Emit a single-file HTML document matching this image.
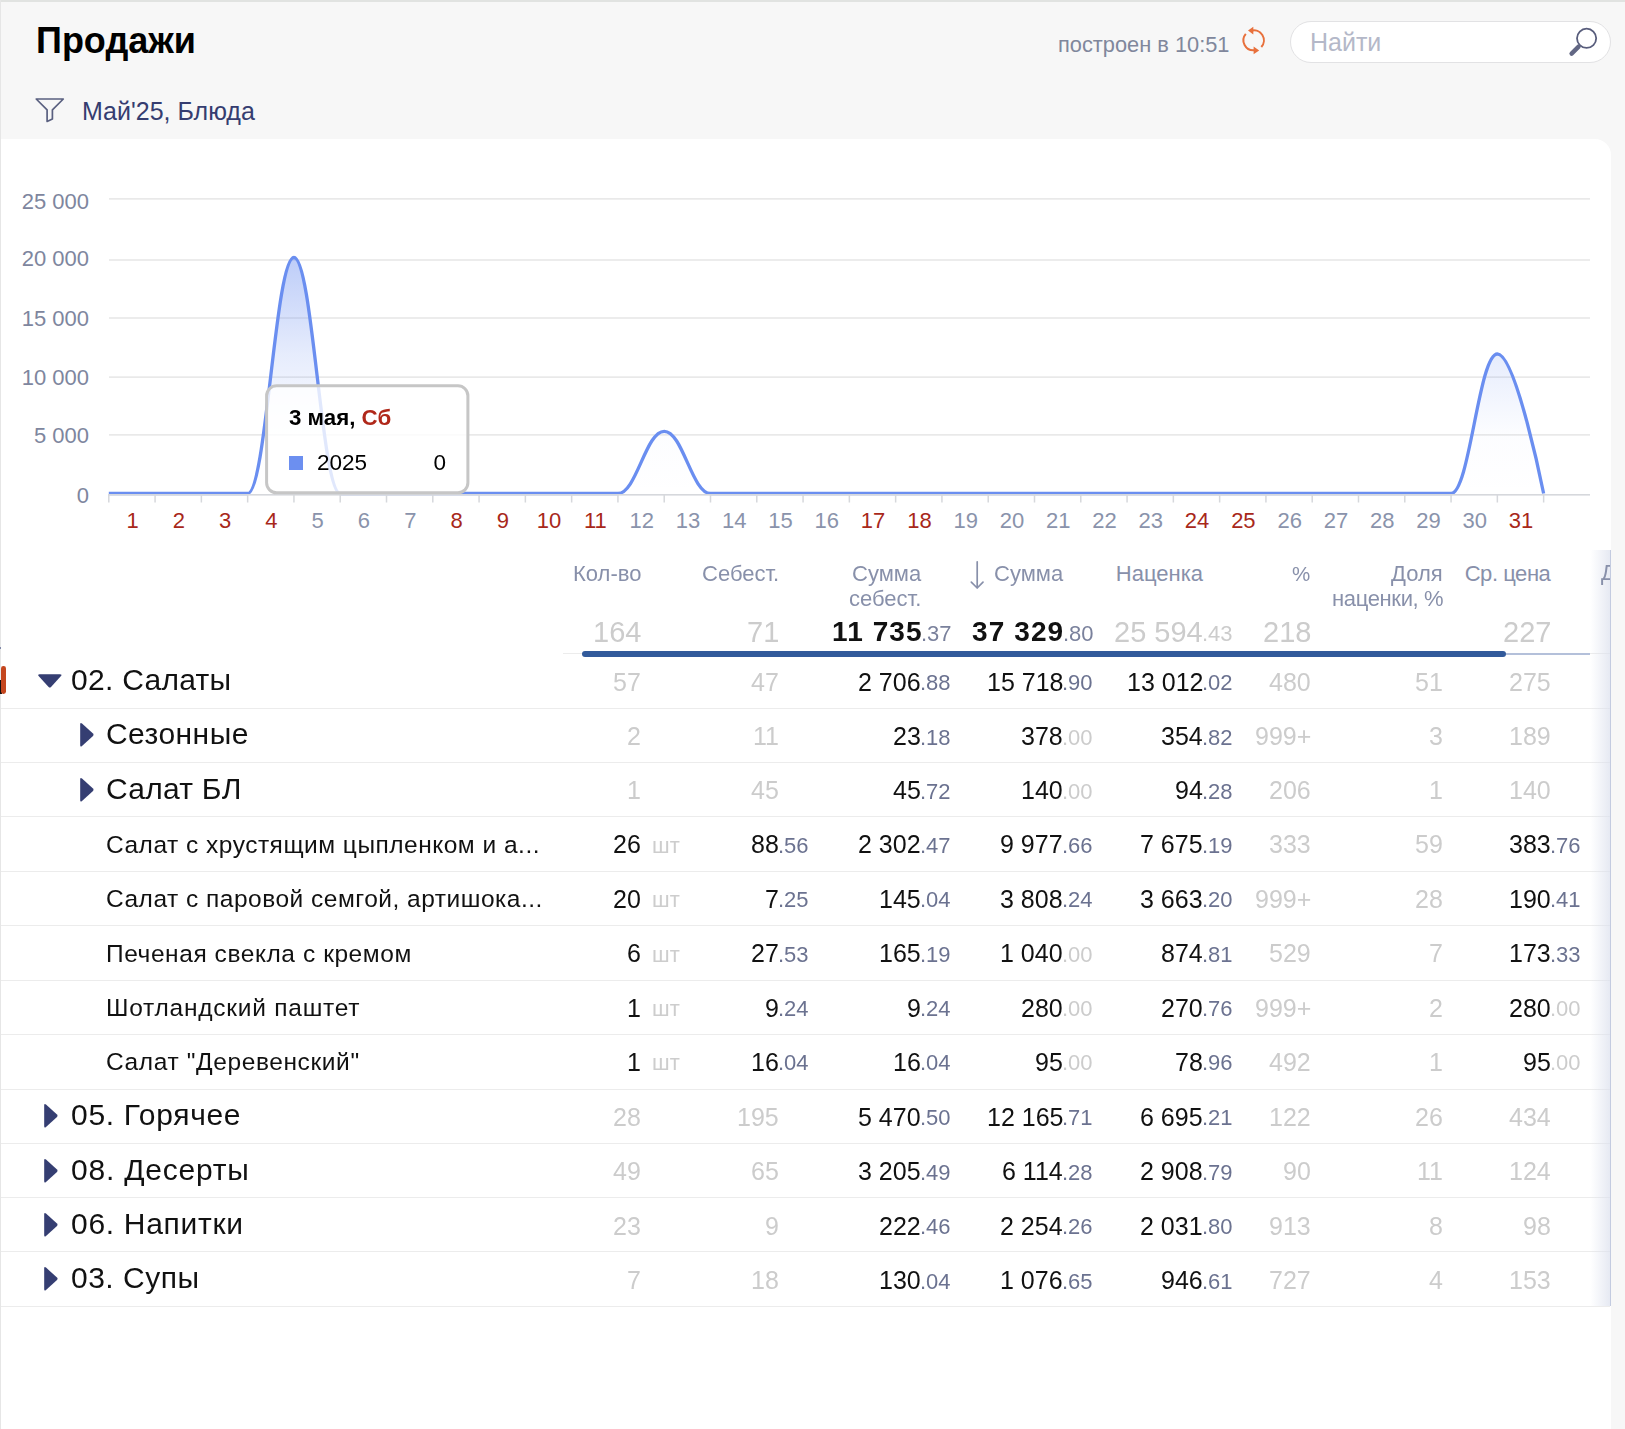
<!DOCTYPE html>
<html><head><meta charset="utf-8"><title>Продажи</title>
<style>
html,body{margin:0;padding:0;}
body{width:1625px;height:1429px;position:relative;overflow:hidden;background:#f7f7f7;font-family:"Liberation Sans",sans-serif;}
.a{position:absolute;white-space:nowrap;line-height:1;}
.r{position:absolute;}
svg text{font-family:"Liberation Sans",sans-serif;}
</style></head><body>
<div class="r" style="left:0px;top:0px;width:1625px;height:2px;background:#e1e3e1;"></div>
<div class="r" style="left:0px;top:0px;width:1px;height:1429px;background:#e6e6e6;"></div>
<div class="r" style="left:1px;top:139px;width:1610px;height:1290px;background:#fff;border-top-right-radius:16px;"></div>
<span class="a" style="top:23.03px;font-size:36px;color:#000;font-weight:bold;left:36.00px;">Продажи</span>
<span class="a" style="top:98.84px;font-size:25px;color:#353d70;left:82.00px;">Май'25, Блюда</span>
<svg class="r" style="left:30px;top:90px" width="40" height="40" viewBox="30 90 40 40">
<path d="M36.2 99 H63.3 L52.4 109.8 V118.9 L47.1 121.4 V109.8 Z" fill="none" stroke="#5a6080" stroke-width="1.7" stroke-linejoin="round"/></svg>
<span class="a" style="top:34.25px;font-size:21.8px;color:#80879c;left:1058.00px;">построен в 10:51</span>
<svg class="r" style="left:1235px;top:20px" width="40" height="40" viewBox="1235 20 40 40">
<g fill="none" stroke="#e8703c" stroke-width="2">
<path d="M1251 30.7 A10 10 0 0 1 1261.3 47"/>
<path d="M1245.8 33.8 A10 10 0 0 0 1254.5 50.2"/>
</g>
<path d="M1248 30.5 L1253.3 26.8 L1253.3 34.4 Z" fill="#e8703c"/>
<path d="M1259.2 50.4 L1253.6 46.6 L1253.6 54.2 Z" fill="#e8703c"/>
</svg>
<div class="r" style="left:1289.5px;top:21px;width:320px;height:40px;background:#fff;border:1px solid #e2e2e4;border-radius:21px;box-sizing:border-box;height:41.5px;width:321.5px;"></div>
<span class="a" style="top:29.64px;font-size:25px;color:#b4b8c8;left:1310.00px;">Найти</span>
<svg class="r" style="left:1560px;top:20px" width="45" height="45" viewBox="1560 20 45 45">
<circle cx="1586.6" cy="38.3" r="9.6" fill="none" stroke="#585d7c" stroke-width="1.8"/>
<path d="M1578.6 46.6 L1571.6 53.6" stroke="#626784" stroke-width="4.4" stroke-linecap="round"/>
</svg>
<svg class="r" style="left:0;top:0" width="1625" height="560" viewBox="0 0 1625 560">
<defs><linearGradient id="g" gradientUnits="userSpaceOnUse" x1="0" y1="257" x2="0" y2="493"><stop offset="0" stop-color="#6c8ff0" stop-opacity="0.45"/><stop offset="0.41" stop-color="#6c8ff0" stop-opacity="0.17"/><stop offset="0.75" stop-color="#6c8ff0" stop-opacity="0.02"/><stop offset="1" stop-color="#6c8ff0" stop-opacity="0"/></linearGradient></defs>
<rect x="109" y="198.15" width="1481" height="1.5" fill="#e6e6e6"/>
<rect x="109" y="259.25" width="1481" height="1.5" fill="#e6e6e6"/>
<rect x="109" y="317.25" width="1481" height="1.5" fill="#e6e6e6"/>
<rect x="109" y="376.35" width="1481" height="1.5" fill="#e6e6e6"/>
<rect x="109" y="434.15" width="1481" height="1.5" fill="#e6e6e6"/>
<path d="M108.80 493.50 C108.80 493.50 136.57 493.50 155.08 493.50 C173.60 493.50 182.86 493.50 201.37 493.50 C219.88 493.50 229.14 493.50 247.65 493.50 C266.17 493.50 275.43 257.50 293.94 257.50 C312.45 257.50 321.71 493.50 340.22 493.50 C358.74 493.50 368.00 493.50 386.51 493.50 C405.02 493.50 414.28 493.50 432.80 493.50 C451.31 493.50 460.57 493.50 479.08 493.50 C497.59 493.50 506.85 493.50 525.36 493.50 C543.88 493.50 553.14 493.50 571.65 493.50 C590.16 493.50 599.42 493.50 617.93 493.50 C636.45 493.50 645.71 431.30 664.22 431.30 C682.73 431.30 691.99 493.50 710.50 493.50 C729.02 493.50 738.28 493.50 756.79 493.50 C775.30 493.50 784.56 493.50 803.07 493.50 C821.59 493.50 830.85 493.50 849.36 493.50 C867.87 493.50 877.13 493.50 895.64 493.50 C914.16 493.50 923.42 493.50 941.93 493.50 C960.44 493.50 969.70 493.50 988.21 493.50 C1006.73 493.50 1015.99 493.50 1034.50 493.50 C1053.01 493.50 1062.27 493.50 1080.78 493.50 C1099.30 493.50 1108.56 493.50 1127.07 493.50 C1145.58 493.50 1154.84 493.50 1173.35 493.50 C1191.87 493.50 1201.13 493.50 1219.64 493.50 C1238.15 493.50 1247.41 493.50 1265.92 493.50 C1284.44 493.50 1293.70 493.50 1312.21 493.50 C1330.72 493.50 1339.98 493.50 1358.49 493.50 C1377.01 493.50 1386.27 493.50 1404.78 493.50 C1423.29 493.50 1432.55 493.50 1451.06 493.50 C1469.58 493.50 1478.84 354.00 1497.35 354.00 C1515.86 354.00 1543.63 493.50 1543.63 493.50 L1543.63 493.5 L108.80 493.5 Z" fill="url(#g)"/>
<path d="M108.80 493.50 C108.80 493.50 136.57 493.50 155.08 493.50 C173.60 493.50 182.86 493.50 201.37 493.50 C219.88 493.50 229.14 493.50 247.65 493.50 C266.17 493.50 275.43 257.50 293.94 257.50 C312.45 257.50 321.71 493.50 340.22 493.50 C358.74 493.50 368.00 493.50 386.51 493.50 C405.02 493.50 414.28 493.50 432.80 493.50 C451.31 493.50 460.57 493.50 479.08 493.50 C497.59 493.50 506.85 493.50 525.36 493.50 C543.88 493.50 553.14 493.50 571.65 493.50 C590.16 493.50 599.42 493.50 617.93 493.50 C636.45 493.50 645.71 431.30 664.22 431.30 C682.73 431.30 691.99 493.50 710.50 493.50 C729.02 493.50 738.28 493.50 756.79 493.50 C775.30 493.50 784.56 493.50 803.07 493.50 C821.59 493.50 830.85 493.50 849.36 493.50 C867.87 493.50 877.13 493.50 895.64 493.50 C914.16 493.50 923.42 493.50 941.93 493.50 C960.44 493.50 969.70 493.50 988.21 493.50 C1006.73 493.50 1015.99 493.50 1034.50 493.50 C1053.01 493.50 1062.27 493.50 1080.78 493.50 C1099.30 493.50 1108.56 493.50 1127.07 493.50 C1145.58 493.50 1154.84 493.50 1173.35 493.50 C1191.87 493.50 1201.13 493.50 1219.64 493.50 C1238.15 493.50 1247.41 493.50 1265.92 493.50 C1284.44 493.50 1293.70 493.50 1312.21 493.50 C1330.72 493.50 1339.98 493.50 1358.49 493.50 C1377.01 493.50 1386.27 493.50 1404.78 493.50 C1423.29 493.50 1432.55 493.50 1451.06 493.50 C1469.58 493.50 1478.84 354.00 1497.35 354.00 C1515.86 354.00 1543.63 493.50 1543.63 493.50" fill="none" stroke="#6a8ef0" stroke-width="3.3" stroke-linejoin="round" stroke-linecap="butt"/>
<rect x="108" y="494" width="1482" height="1.6" fill="#d6d8dc"/>
<rect x="108.05" y="495" width="1.5" height="7.5" fill="#d6d8dc"/>
<rect x="154.33" y="495" width="1.5" height="7.5" fill="#d6d8dc"/>
<rect x="200.62" y="495" width="1.5" height="7.5" fill="#d6d8dc"/>
<rect x="246.90" y="495" width="1.5" height="7.5" fill="#d6d8dc"/>
<rect x="293.19" y="495" width="1.5" height="7.5" fill="#d6d8dc"/>
<rect x="339.47" y="495" width="1.5" height="7.5" fill="#d6d8dc"/>
<rect x="385.76" y="495" width="1.5" height="7.5" fill="#d6d8dc"/>
<rect x="432.05" y="495" width="1.5" height="7.5" fill="#d6d8dc"/>
<rect x="478.33" y="495" width="1.5" height="7.5" fill="#d6d8dc"/>
<rect x="524.61" y="495" width="1.5" height="7.5" fill="#d6d8dc"/>
<rect x="570.90" y="495" width="1.5" height="7.5" fill="#d6d8dc"/>
<rect x="617.18" y="495" width="1.5" height="7.5" fill="#d6d8dc"/>
<rect x="663.47" y="495" width="1.5" height="7.5" fill="#d6d8dc"/>
<rect x="709.75" y="495" width="1.5" height="7.5" fill="#d6d8dc"/>
<rect x="756.04" y="495" width="1.5" height="7.5" fill="#d6d8dc"/>
<rect x="802.32" y="495" width="1.5" height="7.5" fill="#d6d8dc"/>
<rect x="848.61" y="495" width="1.5" height="7.5" fill="#d6d8dc"/>
<rect x="894.89" y="495" width="1.5" height="7.5" fill="#d6d8dc"/>
<rect x="941.18" y="495" width="1.5" height="7.5" fill="#d6d8dc"/>
<rect x="987.46" y="495" width="1.5" height="7.5" fill="#d6d8dc"/>
<rect x="1033.75" y="495" width="1.5" height="7.5" fill="#d6d8dc"/>
<rect x="1080.03" y="495" width="1.5" height="7.5" fill="#d6d8dc"/>
<rect x="1126.32" y="495" width="1.5" height="7.5" fill="#d6d8dc"/>
<rect x="1172.60" y="495" width="1.5" height="7.5" fill="#d6d8dc"/>
<rect x="1218.89" y="495" width="1.5" height="7.5" fill="#d6d8dc"/>
<rect x="1265.17" y="495" width="1.5" height="7.5" fill="#d6d8dc"/>
<rect x="1311.46" y="495" width="1.5" height="7.5" fill="#d6d8dc"/>
<rect x="1357.74" y="495" width="1.5" height="7.5" fill="#d6d8dc"/>
<rect x="1404.03" y="495" width="1.5" height="7.5" fill="#d6d8dc"/>
<rect x="1450.31" y="495" width="1.5" height="7.5" fill="#d6d8dc"/>
<rect x="1496.60" y="495" width="1.5" height="7.5" fill="#d6d8dc"/>
<rect x="1542.88" y="495" width="1.5" height="7.5" fill="#d6d8dc"/>
<text x="89" y="208.5" text-anchor="end" font-size="22" fill="#7e869e">25 000</text>
<text x="89" y="265.5" text-anchor="end" font-size="22" fill="#7e869e">20 000</text>
<text x="89" y="325.5" text-anchor="end" font-size="22" fill="#7e869e">15 000</text>
<text x="89" y="384.5" text-anchor="end" font-size="22" fill="#7e869e">10 000</text>
<text x="89" y="442.5" text-anchor="end" font-size="22" fill="#7e869e">5 000</text>
<text x="89" y="502.5" text-anchor="end" font-size="22" fill="#7e869e">0</text>
<text x="132.54" y="528" text-anchor="middle" font-size="22" fill="#a8281a">1</text>
<text x="178.83" y="528" text-anchor="middle" font-size="22" fill="#a8281a">2</text>
<text x="225.11" y="528" text-anchor="middle" font-size="22" fill="#a8281a">3</text>
<text x="271.40" y="528" text-anchor="middle" font-size="22" fill="#a8281a">4</text>
<text x="317.68" y="528" text-anchor="middle" font-size="22" fill="#8a93ab">5</text>
<text x="363.97" y="528" text-anchor="middle" font-size="22" fill="#8a93ab">6</text>
<text x="410.25" y="528" text-anchor="middle" font-size="22" fill="#8a93ab">7</text>
<text x="456.54" y="528" text-anchor="middle" font-size="22" fill="#a8281a">8</text>
<text x="502.82" y="528" text-anchor="middle" font-size="22" fill="#a8281a">9</text>
<text x="549.11" y="528" text-anchor="middle" font-size="22" fill="#a8281a">10</text>
<text x="595.39" y="528" text-anchor="middle" font-size="22" fill="#a8281a">11</text>
<text x="641.68" y="528" text-anchor="middle" font-size="22" fill="#8a93ab">12</text>
<text x="687.96" y="528" text-anchor="middle" font-size="22" fill="#8a93ab">13</text>
<text x="734.25" y="528" text-anchor="middle" font-size="22" fill="#8a93ab">14</text>
<text x="780.53" y="528" text-anchor="middle" font-size="22" fill="#8a93ab">15</text>
<text x="826.82" y="528" text-anchor="middle" font-size="22" fill="#8a93ab">16</text>
<text x="873.10" y="528" text-anchor="middle" font-size="22" fill="#a8281a">17</text>
<text x="919.39" y="528" text-anchor="middle" font-size="22" fill="#a8281a">18</text>
<text x="965.67" y="528" text-anchor="middle" font-size="22" fill="#8a93ab">19</text>
<text x="1011.96" y="528" text-anchor="middle" font-size="22" fill="#8a93ab">20</text>
<text x="1058.24" y="528" text-anchor="middle" font-size="22" fill="#8a93ab">21</text>
<text x="1104.53" y="528" text-anchor="middle" font-size="22" fill="#8a93ab">22</text>
<text x="1150.81" y="528" text-anchor="middle" font-size="22" fill="#8a93ab">23</text>
<text x="1197.10" y="528" text-anchor="middle" font-size="22" fill="#a8281a">24</text>
<text x="1243.38" y="528" text-anchor="middle" font-size="22" fill="#a8281a">25</text>
<text x="1289.67" y="528" text-anchor="middle" font-size="22" fill="#8a93ab">26</text>
<text x="1335.95" y="528" text-anchor="middle" font-size="22" fill="#8a93ab">27</text>
<text x="1382.24" y="528" text-anchor="middle" font-size="22" fill="#8a93ab">28</text>
<text x="1428.52" y="528" text-anchor="middle" font-size="22" fill="#8a93ab">29</text>
<text x="1474.81" y="528" text-anchor="middle" font-size="22" fill="#8a93ab">30</text>
<text x="1521.09" y="528" text-anchor="middle" font-size="22" fill="#a8281a">31</text>
</svg>
<svg class="r" style="left:0;top:0;will-change:transform" width="1625" height="560" viewBox="0 0 1625 560">
<rect x="266.6" y="385.8" width="201.3" height="107.0" rx="10" ry="10" fill="rgba(255,255,255,0.8)" stroke="#c6c6c6" stroke-width="3"/>
<text x="289" y="424.8" font-size="22.3" font-weight="bold" fill="#000">3 мая, <tspan fill="#b0281a">Сб</tspan></text>
<rect x="289" y="456" width="14" height="14" fill="#6c8ff0"/>
<text x="317" y="469.5" font-size="22.5" fill="#000">2025</text>
<text x="446" y="469.5" font-size="22.5" text-anchor="end" fill="#000">0</text>
</svg>
<span class="a" style="top:563.08px;font-size:22px;color:#8890aa;will-change:transform;right:984.00px;">Кол-во</span>
<span class="a" style="top:563.08px;font-size:22px;color:#8890aa;will-change:transform;right:846.00px;">Себест.</span>
<span class="a" style="top:563.08px;font-size:22px;color:#8890aa;will-change:transform;right:704.00px;">Сумма</span>
<span class="a" style="top:587.58px;font-size:22px;color:#8890aa;will-change:transform;right:704.00px;">себест.</span>
<span class="a" style="top:563.08px;font-size:22px;color:#8890aa;will-change:transform;right:562.00px;">Сумма</span>
<span class="a" style="top:563.08px;font-size:22px;color:#8890aa;right:422.00px;">Наценка</span>
<span class="a" style="top:564.35px;font-size:20.5px;color:#8890aa;will-change:transform;right:314.50px;">%</span>
<span class="a" style="top:563.08px;font-size:22px;color:#8890aa;will-change:transform;right:182.00px;">Доля</span>
<span class="a" style="top:587.58px;font-size:22px;color:#8890aa;will-change:transform;letter-spacing:-0.35px;right:181.70px;">наценки, %</span>
<span class="a" style="top:563.08px;font-size:22px;color:#8890aa;letter-spacing:-0.45px;right:74.60px;">Ср. цена</span>
<svg class="r" style="left:960px;top:555px" width="30" height="40" viewBox="960 555 30 40">
<path d="M977.2 561.8 V588 M971.3 582.2 L977.2 588 L983 582.2" fill="none" stroke="#8890aa" stroke-width="1.7" stroke-linecap="round" stroke-linejoin="round"/></svg>
<span class="a" style="top:617.55px;font-size:29px;color:#cccccc;will-change:transform;right:984.00px;">164</span>
<span class="a" style="top:617.55px;font-size:29px;color:#cccccc;will-change:transform;right:846.00px;">71</span>
<span class="a" style="top:618.40px;font-size:28px;color:#111111;will-change:transform;font-weight:bold;letter-spacing:1.1px;right:702.80px;">11 735</span>
<span class="a" style="top:623.48px;font-size:22px;color:#7a819c;will-change:transform;left:920.50px;">.37</span>
<span class="a" style="top:618.40px;font-size:28px;color:#111111;will-change:transform;font-weight:bold;letter-spacing:1.1px;right:560.80px;">37 329</span>
<span class="a" style="top:623.48px;font-size:22px;color:#7a819c;will-change:transform;left:1062.50px;">.80</span>
<span class="a" style="top:617.55px;font-size:29px;color:#cccccc;will-change:transform;right:422.00px;">25 594</span>
<span class="a" style="top:623.48px;font-size:22px;color:#cccccc;will-change:transform;left:1202.00px;">.43</span>
<span class="a" style="top:617.55px;font-size:29px;color:#cccccc;will-change:transform;right:314.00px;">218</span>
<span class="a" style="top:617.55px;font-size:29px;color:#cccccc;will-change:transform;right:74.00px;">227</span>
<div class="r" style="left:563px;top:653px;width:1047px;height:1px;background:#ececec;"></div>
<div class="r" style="left:1506px;top:652.6px;width:84px;height:2px;background:#b4c0da;"></div>
<div class="r" style="left:582px;top:651px;width:924px;height:6px;background:#325a9b;border-radius:3px;"></div>
<div class="r" style="left:1px;top:708px;width:1609px;height:1px;background:#ececec;"></div>
<div class="r" style="left:1px;top:762px;width:1609px;height:1px;background:#ececec;"></div>
<div class="r" style="left:1px;top:816px;width:1609px;height:1px;background:#ececec;"></div>
<div class="r" style="left:1px;top:871px;width:1609px;height:1px;background:#ececec;"></div>
<div class="r" style="left:1px;top:925px;width:1609px;height:1px;background:#ececec;"></div>
<div class="r" style="left:1px;top:980px;width:1609px;height:1px;background:#ececec;"></div>
<div class="r" style="left:1px;top:1034px;width:1609px;height:1px;background:#ececec;"></div>
<div class="r" style="left:1px;top:1089px;width:1609px;height:1px;background:#ececec;"></div>
<div class="r" style="left:1px;top:1143px;width:1609px;height:1px;background:#ececec;"></div>
<div class="r" style="left:1px;top:1197px;width:1609px;height:1px;background:#ececec;"></div>
<div class="r" style="left:1px;top:1251px;width:1609px;height:1px;background:#ececec;"></div>
<div class="r" style="left:1px;top:1306px;width:1609px;height:1px;background:#ececec;"></div>
<span class="a" style="top:664.90px;font-size:30px;color:#111111;will-change:transform;letter-spacing:0.28px;left:71.00px;">02. Салаты</span>
<svg class="r" style="left:37px;top:673px" width="28" height="18" viewBox="0 0 28 18"><path d="M2.5 1.2 H23 Q25.5 1.2 24 3 L14 14 Q12.8 15.2 11.6 14 L1.6 3 Q0.3 1.2 2.5 1.2 Z" fill="#353e72"/></svg>
<span class="a" style="top:669.64px;font-size:25px;color:#cccccc;will-change:transform;right:984.00px;">57</span>
<span class="a" style="top:669.64px;font-size:25px;color:#cccccc;will-change:transform;right:846.00px;">47</span>
<span class="a" style="top:669.64px;font-size:25px;color:#111111;will-change:transform;right:704.00px;">2 706</span>
<span class="a" style="top:672.18px;font-size:22px;color:#6b7290;will-change:transform;left:920.00px;">.88</span>
<span class="a" style="top:669.64px;font-size:25px;color:#111111;will-change:transform;right:562.00px;">15 718</span>
<span class="a" style="top:672.18px;font-size:22px;color:#6b7290;will-change:transform;left:1062.00px;">.90</span>
<span class="a" style="top:669.64px;font-size:25px;color:#111111;will-change:transform;right:422.00px;">13 012</span>
<span class="a" style="top:672.18px;font-size:22px;color:#6b7290;will-change:transform;left:1202.00px;">.02</span>
<span class="a" style="top:669.64px;font-size:25px;color:#cccccc;will-change:transform;right:314.00px;">480</span>
<span class="a" style="top:669.64px;font-size:25px;color:#cccccc;will-change:transform;right:182.00px;">51</span>
<span class="a" style="top:669.64px;font-size:25px;color:#cccccc;will-change:transform;right:74.00px;">275</span>
<span class="a" style="top:719.30px;font-size:30px;color:#111111;will-change:transform;letter-spacing:0.45px;left:106.00px;">Сезонные</span>
<svg class="r" style="left:79px;top:722px" width="18" height="28" viewBox="0 0 18 28"><path d="M1.2 2.5 V23 Q1.2 25.5 3 24 L14 14 Q15.2 12.8 14 11.6 L3 1.6 Q1.2 0.3 1.2 2.5 Z" fill="#353e72"/></svg>
<span class="a" style="top:724.04px;font-size:25px;color:#cccccc;will-change:transform;right:984.00px;">2</span>
<span class="a" style="top:724.04px;font-size:25px;color:#cccccc;will-change:transform;right:846.00px;">11</span>
<span class="a" style="top:724.04px;font-size:25px;color:#111111;will-change:transform;right:704.00px;">23</span>
<span class="a" style="top:726.58px;font-size:22px;color:#6b7290;will-change:transform;left:920.00px;">.18</span>
<span class="a" style="top:724.04px;font-size:25px;color:#111111;will-change:transform;right:562.00px;">378</span>
<span class="a" style="top:726.58px;font-size:22px;color:#cccccc;will-change:transform;left:1062.00px;">.00</span>
<span class="a" style="top:724.04px;font-size:25px;color:#111111;will-change:transform;right:422.00px;">354</span>
<span class="a" style="top:726.58px;font-size:22px;color:#6b7290;will-change:transform;left:1202.00px;">.82</span>
<span class="a" style="top:724.04px;font-size:25px;color:#cccccc;will-change:transform;right:314.00px;">999+</span>
<span class="a" style="top:724.04px;font-size:25px;color:#cccccc;will-change:transform;right:182.00px;">3</span>
<span class="a" style="top:724.04px;font-size:25px;color:#cccccc;will-change:transform;right:74.00px;">189</span>
<span class="a" style="top:773.70px;font-size:30px;color:#111111;will-change:transform;letter-spacing:0.25px;left:106.00px;">Салат БЛ</span>
<svg class="r" style="left:79px;top:777px" width="18" height="28" viewBox="0 0 18 28"><path d="M1.2 2.5 V23 Q1.2 25.5 3 24 L14 14 Q15.2 12.8 14 11.6 L3 1.6 Q1.2 0.3 1.2 2.5 Z" fill="#353e72"/></svg>
<span class="a" style="top:778.44px;font-size:25px;color:#cccccc;will-change:transform;right:984.00px;">1</span>
<span class="a" style="top:778.44px;font-size:25px;color:#cccccc;will-change:transform;right:846.00px;">45</span>
<span class="a" style="top:778.44px;font-size:25px;color:#111111;will-change:transform;right:704.00px;">45</span>
<span class="a" style="top:780.98px;font-size:22px;color:#6b7290;will-change:transform;left:920.00px;">.72</span>
<span class="a" style="top:778.44px;font-size:25px;color:#111111;will-change:transform;right:562.00px;">140</span>
<span class="a" style="top:780.98px;font-size:22px;color:#cccccc;will-change:transform;left:1062.00px;">.00</span>
<span class="a" style="top:778.44px;font-size:25px;color:#111111;will-change:transform;right:422.00px;">94</span>
<span class="a" style="top:780.98px;font-size:22px;color:#6b7290;will-change:transform;left:1202.00px;">.28</span>
<span class="a" style="top:778.44px;font-size:25px;color:#cccccc;will-change:transform;right:314.00px;">206</span>
<span class="a" style="top:778.44px;font-size:25px;color:#cccccc;will-change:transform;right:182.00px;">1</span>
<span class="a" style="top:778.44px;font-size:25px;color:#cccccc;will-change:transform;right:74.00px;">140</span>
<span class="a" style="top:832.76px;font-size:24.5px;color:#111111;will-change:transform;letter-spacing:0.5px;left:106.00px;">Салат с хрустящим цыпленком и а...</span>
<span class="a" style="top:832.34px;font-size:25px;color:#111111;will-change:transform;right:984.00px;">26</span>
<span class="a" style="top:834.88px;font-size:22px;color:#cdcdcd;will-change:transform;left:652.00px;">шт</span>
<span class="a" style="top:832.34px;font-size:25px;color:#111111;will-change:transform;right:846.00px;">88</span>
<span class="a" style="top:834.88px;font-size:22px;color:#6b7290;will-change:transform;left:778.00px;">.56</span>
<span class="a" style="top:832.34px;font-size:25px;color:#111111;will-change:transform;right:704.00px;">2 302</span>
<span class="a" style="top:834.88px;font-size:22px;color:#6b7290;will-change:transform;left:920.00px;">.47</span>
<span class="a" style="top:832.34px;font-size:25px;color:#111111;will-change:transform;right:562.00px;">9 977</span>
<span class="a" style="top:834.88px;font-size:22px;color:#6b7290;will-change:transform;left:1062.00px;">.66</span>
<span class="a" style="top:832.34px;font-size:25px;color:#111111;will-change:transform;right:422.00px;">7 675</span>
<span class="a" style="top:834.88px;font-size:22px;color:#6b7290;will-change:transform;left:1202.00px;">.19</span>
<span class="a" style="top:832.34px;font-size:25px;color:#cccccc;will-change:transform;right:314.00px;">333</span>
<span class="a" style="top:832.34px;font-size:25px;color:#cccccc;will-change:transform;right:182.00px;">59</span>
<span class="a" style="top:832.34px;font-size:25px;color:#111111;will-change:transform;right:74.00px;">383</span>
<span class="a" style="top:834.88px;font-size:22px;color:#6b7290;will-change:transform;left:1550.00px;">.76</span>
<span class="a" style="top:887.16px;font-size:24.5px;color:#111111;will-change:transform;letter-spacing:0.5px;left:106.00px;">Салат с паровой семгой, артишока...</span>
<span class="a" style="top:886.74px;font-size:25px;color:#111111;will-change:transform;right:984.00px;">20</span>
<span class="a" style="top:889.28px;font-size:22px;color:#cdcdcd;will-change:transform;left:652.00px;">шт</span>
<span class="a" style="top:886.74px;font-size:25px;color:#111111;will-change:transform;right:846.00px;">7</span>
<span class="a" style="top:889.28px;font-size:22px;color:#6b7290;will-change:transform;left:778.00px;">.25</span>
<span class="a" style="top:886.74px;font-size:25px;color:#111111;will-change:transform;right:704.00px;">145</span>
<span class="a" style="top:889.28px;font-size:22px;color:#6b7290;will-change:transform;left:920.00px;">.04</span>
<span class="a" style="top:886.74px;font-size:25px;color:#111111;will-change:transform;right:562.00px;">3 808</span>
<span class="a" style="top:889.28px;font-size:22px;color:#6b7290;will-change:transform;left:1062.00px;">.24</span>
<span class="a" style="top:886.74px;font-size:25px;color:#111111;will-change:transform;right:422.00px;">3 663</span>
<span class="a" style="top:889.28px;font-size:22px;color:#6b7290;will-change:transform;left:1202.00px;">.20</span>
<span class="a" style="top:886.74px;font-size:25px;color:#cccccc;will-change:transform;right:314.00px;">999+</span>
<span class="a" style="top:886.74px;font-size:25px;color:#cccccc;will-change:transform;right:182.00px;">28</span>
<span class="a" style="top:886.74px;font-size:25px;color:#111111;will-change:transform;right:74.00px;">190</span>
<span class="a" style="top:889.28px;font-size:22px;color:#6b7290;will-change:transform;left:1550.00px;">.41</span>
<span class="a" style="top:941.56px;font-size:24.5px;color:#111111;will-change:transform;letter-spacing:0.57px;left:106.00px;">Печеная свекла с кремом</span>
<span class="a" style="top:941.14px;font-size:25px;color:#111111;will-change:transform;right:984.00px;">6</span>
<span class="a" style="top:943.68px;font-size:22px;color:#cdcdcd;will-change:transform;left:652.00px;">шт</span>
<span class="a" style="top:941.14px;font-size:25px;color:#111111;will-change:transform;right:846.00px;">27</span>
<span class="a" style="top:943.68px;font-size:22px;color:#6b7290;will-change:transform;left:778.00px;">.53</span>
<span class="a" style="top:941.14px;font-size:25px;color:#111111;will-change:transform;right:704.00px;">165</span>
<span class="a" style="top:943.68px;font-size:22px;color:#6b7290;will-change:transform;left:920.00px;">.19</span>
<span class="a" style="top:941.14px;font-size:25px;color:#111111;will-change:transform;right:562.00px;">1 040</span>
<span class="a" style="top:943.68px;font-size:22px;color:#cccccc;will-change:transform;left:1062.00px;">.00</span>
<span class="a" style="top:941.14px;font-size:25px;color:#111111;will-change:transform;right:422.00px;">874</span>
<span class="a" style="top:943.68px;font-size:22px;color:#6b7290;will-change:transform;left:1202.00px;">.81</span>
<span class="a" style="top:941.14px;font-size:25px;color:#cccccc;will-change:transform;right:314.00px;">529</span>
<span class="a" style="top:941.14px;font-size:25px;color:#cccccc;will-change:transform;right:182.00px;">7</span>
<span class="a" style="top:941.14px;font-size:25px;color:#111111;will-change:transform;right:74.00px;">173</span>
<span class="a" style="top:943.68px;font-size:22px;color:#6b7290;will-change:transform;left:1550.00px;">.33</span>
<span class="a" style="top:995.96px;font-size:24.5px;color:#111111;will-change:transform;letter-spacing:0.76px;left:106.00px;">Шотландский паштет</span>
<span class="a" style="top:995.54px;font-size:25px;color:#111111;will-change:transform;right:984.00px;">1</span>
<span class="a" style="top:998.08px;font-size:22px;color:#cdcdcd;will-change:transform;left:652.00px;">шт</span>
<span class="a" style="top:995.54px;font-size:25px;color:#111111;will-change:transform;right:846.00px;">9</span>
<span class="a" style="top:998.08px;font-size:22px;color:#6b7290;will-change:transform;left:778.00px;">.24</span>
<span class="a" style="top:995.54px;font-size:25px;color:#111111;will-change:transform;right:704.00px;">9</span>
<span class="a" style="top:998.08px;font-size:22px;color:#6b7290;will-change:transform;left:920.00px;">.24</span>
<span class="a" style="top:995.54px;font-size:25px;color:#111111;will-change:transform;right:562.00px;">280</span>
<span class="a" style="top:998.08px;font-size:22px;color:#cccccc;will-change:transform;left:1062.00px;">.00</span>
<span class="a" style="top:995.54px;font-size:25px;color:#111111;will-change:transform;right:422.00px;">270</span>
<span class="a" style="top:998.08px;font-size:22px;color:#6b7290;will-change:transform;left:1202.00px;">.76</span>
<span class="a" style="top:995.54px;font-size:25px;color:#cccccc;will-change:transform;right:314.00px;">999+</span>
<span class="a" style="top:995.54px;font-size:25px;color:#cccccc;will-change:transform;right:182.00px;">2</span>
<span class="a" style="top:995.54px;font-size:25px;color:#111111;will-change:transform;right:74.00px;">280</span>
<span class="a" style="top:998.08px;font-size:22px;color:#cccccc;will-change:transform;left:1550.00px;">.00</span>
<span class="a" style="top:1050.36px;font-size:24.5px;color:#111111;will-change:transform;letter-spacing:0.61px;left:106.00px;">Салат "Деревенский"</span>
<span class="a" style="top:1049.94px;font-size:25px;color:#111111;will-change:transform;right:984.00px;">1</span>
<span class="a" style="top:1052.48px;font-size:22px;color:#cdcdcd;will-change:transform;left:652.00px;">шт</span>
<span class="a" style="top:1049.94px;font-size:25px;color:#111111;will-change:transform;right:846.00px;">16</span>
<span class="a" style="top:1052.48px;font-size:22px;color:#6b7290;will-change:transform;left:778.00px;">.04</span>
<span class="a" style="top:1049.94px;font-size:25px;color:#111111;will-change:transform;right:704.00px;">16</span>
<span class="a" style="top:1052.48px;font-size:22px;color:#6b7290;will-change:transform;left:920.00px;">.04</span>
<span class="a" style="top:1049.94px;font-size:25px;color:#111111;will-change:transform;right:562.00px;">95</span>
<span class="a" style="top:1052.48px;font-size:22px;color:#cccccc;will-change:transform;left:1062.00px;">.00</span>
<span class="a" style="top:1049.94px;font-size:25px;color:#111111;will-change:transform;right:422.00px;">78</span>
<span class="a" style="top:1052.48px;font-size:22px;color:#6b7290;will-change:transform;left:1202.00px;">.96</span>
<span class="a" style="top:1049.94px;font-size:25px;color:#cccccc;will-change:transform;right:314.00px;">492</span>
<span class="a" style="top:1049.94px;font-size:25px;color:#cccccc;will-change:transform;right:182.00px;">1</span>
<span class="a" style="top:1049.94px;font-size:25px;color:#111111;will-change:transform;right:74.00px;">95</span>
<span class="a" style="top:1052.48px;font-size:22px;color:#cccccc;will-change:transform;left:1550.00px;">.00</span>
<span class="a" style="top:1100.11px;font-size:30px;color:#111111;will-change:transform;letter-spacing:0.7px;left:71.00px;">05. Горячее</span>
<svg class="r" style="left:43px;top:1103px" width="18" height="28" viewBox="0 0 18 28"><path d="M1.2 2.5 V23 Q1.2 25.5 3 24 L14 14 Q15.2 12.8 14 11.6 L3 1.6 Q1.2 0.3 1.2 2.5 Z" fill="#353e72"/></svg>
<span class="a" style="top:1104.84px;font-size:25px;color:#cccccc;will-change:transform;right:984.00px;">28</span>
<span class="a" style="top:1104.84px;font-size:25px;color:#cccccc;will-change:transform;right:846.00px;">195</span>
<span class="a" style="top:1104.84px;font-size:25px;color:#111111;will-change:transform;right:704.00px;">5 470</span>
<span class="a" style="top:1107.38px;font-size:22px;color:#6b7290;will-change:transform;left:920.00px;">.50</span>
<span class="a" style="top:1104.84px;font-size:25px;color:#111111;will-change:transform;right:562.00px;">12 165</span>
<span class="a" style="top:1107.38px;font-size:22px;color:#6b7290;will-change:transform;left:1062.00px;">.71</span>
<span class="a" style="top:1104.84px;font-size:25px;color:#111111;will-change:transform;right:422.00px;">6 695</span>
<span class="a" style="top:1107.38px;font-size:22px;color:#6b7290;will-change:transform;left:1202.00px;">.21</span>
<span class="a" style="top:1104.84px;font-size:25px;color:#cccccc;will-change:transform;right:314.00px;">122</span>
<span class="a" style="top:1104.84px;font-size:25px;color:#cccccc;will-change:transform;right:182.00px;">26</span>
<span class="a" style="top:1104.84px;font-size:25px;color:#cccccc;will-change:transform;right:74.00px;">434</span>
<span class="a" style="top:1154.50px;font-size:30px;color:#111111;will-change:transform;letter-spacing:0.78px;left:71.00px;">08. Десерты</span>
<svg class="r" style="left:43px;top:1158px" width="18" height="28" viewBox="0 0 18 28"><path d="M1.2 2.5 V23 Q1.2 25.5 3 24 L14 14 Q15.2 12.8 14 11.6 L3 1.6 Q1.2 0.3 1.2 2.5 Z" fill="#353e72"/></svg>
<span class="a" style="top:1159.24px;font-size:25px;color:#cccccc;will-change:transform;right:984.00px;">49</span>
<span class="a" style="top:1159.24px;font-size:25px;color:#cccccc;will-change:transform;right:846.00px;">65</span>
<span class="a" style="top:1159.24px;font-size:25px;color:#111111;will-change:transform;right:704.00px;">3 205</span>
<span class="a" style="top:1161.78px;font-size:22px;color:#6b7290;will-change:transform;left:920.00px;">.49</span>
<span class="a" style="top:1159.24px;font-size:25px;color:#111111;will-change:transform;right:562.00px;">6 114</span>
<span class="a" style="top:1161.78px;font-size:22px;color:#6b7290;will-change:transform;left:1062.00px;">.28</span>
<span class="a" style="top:1159.24px;font-size:25px;color:#111111;will-change:transform;right:422.00px;">2 908</span>
<span class="a" style="top:1161.78px;font-size:22px;color:#6b7290;will-change:transform;left:1202.00px;">.79</span>
<span class="a" style="top:1159.24px;font-size:25px;color:#cccccc;will-change:transform;right:314.00px;">90</span>
<span class="a" style="top:1159.24px;font-size:25px;color:#cccccc;will-change:transform;right:182.00px;">11</span>
<span class="a" style="top:1159.24px;font-size:25px;color:#cccccc;will-change:transform;right:74.00px;">124</span>
<span class="a" style="top:1208.90px;font-size:30px;color:#111111;will-change:transform;letter-spacing:0.7px;left:71.00px;">06. Напитки</span>
<svg class="r" style="left:43px;top:1212px" width="18" height="28" viewBox="0 0 18 28"><path d="M1.2 2.5 V23 Q1.2 25.5 3 24 L14 14 Q15.2 12.8 14 11.6 L3 1.6 Q1.2 0.3 1.2 2.5 Z" fill="#353e72"/></svg>
<span class="a" style="top:1213.64px;font-size:25px;color:#cccccc;will-change:transform;right:984.00px;">23</span>
<span class="a" style="top:1213.64px;font-size:25px;color:#cccccc;will-change:transform;right:846.00px;">9</span>
<span class="a" style="top:1213.64px;font-size:25px;color:#111111;will-change:transform;right:704.00px;">222</span>
<span class="a" style="top:1216.18px;font-size:22px;color:#6b7290;will-change:transform;left:920.00px;">.46</span>
<span class="a" style="top:1213.64px;font-size:25px;color:#111111;will-change:transform;right:562.00px;">2 254</span>
<span class="a" style="top:1216.18px;font-size:22px;color:#6b7290;will-change:transform;left:1062.00px;">.26</span>
<span class="a" style="top:1213.64px;font-size:25px;color:#111111;will-change:transform;right:422.00px;">2 031</span>
<span class="a" style="top:1216.18px;font-size:22px;color:#6b7290;will-change:transform;left:1202.00px;">.80</span>
<span class="a" style="top:1213.64px;font-size:25px;color:#cccccc;will-change:transform;right:314.00px;">913</span>
<span class="a" style="top:1213.64px;font-size:25px;color:#cccccc;will-change:transform;right:182.00px;">8</span>
<span class="a" style="top:1213.64px;font-size:25px;color:#cccccc;will-change:transform;right:74.00px;">98</span>
<span class="a" style="top:1263.31px;font-size:30px;color:#111111;will-change:transform;letter-spacing:0.5px;left:71.00px;">03. Супы</span>
<svg class="r" style="left:43px;top:1266px" width="18" height="28" viewBox="0 0 18 28"><path d="M1.2 2.5 V23 Q1.2 25.5 3 24 L14 14 Q15.2 12.8 14 11.6 L3 1.6 Q1.2 0.3 1.2 2.5 Z" fill="#353e72"/></svg>
<span class="a" style="top:1268.04px;font-size:25px;color:#cccccc;will-change:transform;right:984.00px;">7</span>
<span class="a" style="top:1268.04px;font-size:25px;color:#cccccc;will-change:transform;right:846.00px;">18</span>
<span class="a" style="top:1268.04px;font-size:25px;color:#111111;will-change:transform;right:704.00px;">130</span>
<span class="a" style="top:1270.58px;font-size:22px;color:#6b7290;will-change:transform;left:920.00px;">.04</span>
<span class="a" style="top:1268.04px;font-size:25px;color:#111111;will-change:transform;right:562.00px;">1 076</span>
<span class="a" style="top:1270.58px;font-size:22px;color:#6b7290;will-change:transform;left:1062.00px;">.65</span>
<span class="a" style="top:1268.04px;font-size:25px;color:#111111;will-change:transform;right:422.00px;">946</span>
<span class="a" style="top:1270.58px;font-size:22px;color:#6b7290;will-change:transform;left:1202.00px;">.61</span>
<span class="a" style="top:1268.04px;font-size:25px;color:#cccccc;will-change:transform;right:314.00px;">727</span>
<span class="a" style="top:1268.04px;font-size:25px;color:#cccccc;will-change:transform;right:182.00px;">4</span>
<span class="a" style="top:1268.04px;font-size:25px;color:#cccccc;will-change:transform;right:74.00px;">153</span>
<div class="r" style="left:1590px;top:550px;width:20px;height:756px;background:transparent;background:linear-gradient(to right, rgba(235,239,248,0), rgba(220,225,238,0.7));"></div>
<div class="r" style="left:1610px;top:550px;width:1px;height:756px;background:#c3cbe0;"></div>
<div class="r" style="left:1595px;top:550px;width:15px;height:60px;overflow:hidden;"><span class="a" style="left:6px;top:12.38px;font-size:22px;color:#8890aa;">Д</span></div>
<div class="r" style="left:0px;top:680px;width:2px;height:14px;background:#111;"></div>
<div class="r" style="left:1.1px;top:666px;width:4.8px;height:28px;background:#c4461e;border-radius:2.4px;"></div>
<div class="r" style="left:0px;top:647px;width:1px;height:2px;background:#8088a8;"></div>
</body></html>
